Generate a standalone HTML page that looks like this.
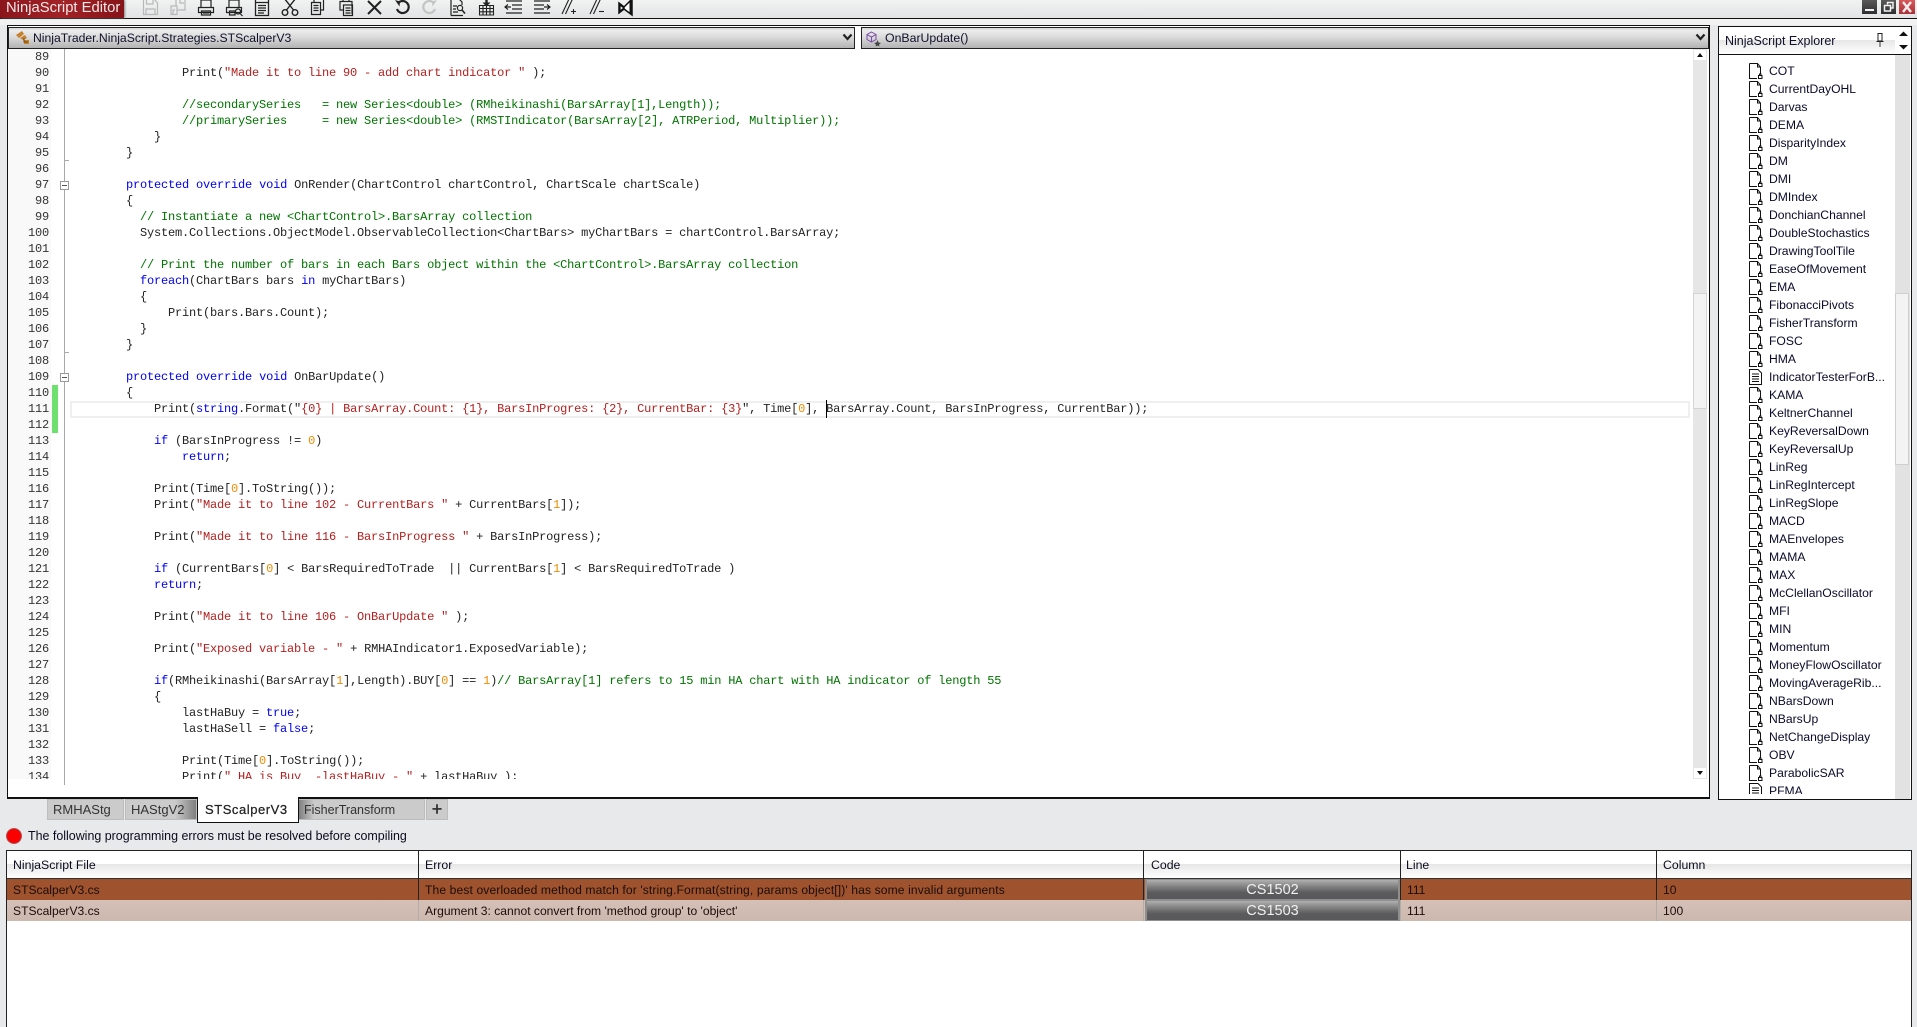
<!DOCTYPE html>
<html><head><meta charset="utf-8"><title>NinjaScript Editor</title>
<style>
html,body{margin:0;padding:0;width:1917px;height:1027px;overflow:hidden;background:#e8e9eb;font-family:"Liberation Sans",Arial,sans-serif;font-size:12px;color:#0a0a1e}
div,svg,pre{position:absolute;box-sizing:border-box}
.t{white-space:pre;line-height:16px}
#code,#nums{font-family:"Liberation Mono",monospace;font-size:12px;letter-spacing:-.2px;line-height:16px;margin:0}
#code{left:70px;top:49px;color:#222}
#nums{left:0;top:49px;width:49px;text-align:right;color:#333}
.k{color:#0000f0}.s{color:#b5201f}.c{color:#007400}.n{color:#f28a00}
.tab{top:799px;height:21px;background:#cbcbcb;border:1px solid #bdbdbd;color:#333;font-size:13px;line-height:20px;white-space:pre}
.hd{top:850px;height:28px;line-height:28px;white-space:pre;color:#0a0a1e;background:none;font-size:12.3px}
.r{height:21px;line-height:23px;white-space:pre;color:#1b0d08;font-size:12.1px}
.btn{left:1145px;width:255px;background:linear-gradient(#b0b0b0 0,#8e8e8e 25%,#5c5c5e 65%,#58585a 100%);border:1px solid #8f8f8f;border-left-width:2px;border-right-width:2px;color:#f0f0f0;text-align:center;font-size:14.5px;line-height:21px}
.li{left:1769px;white-space:pre;line-height:18px;color:#0a0a2a;font-size:12.15px}
</style></head><body>

<!-- top strip -->
<div style="left:0;top:0;width:1917px;height:18px;background:linear-gradient(#f1f2f2,#e3e4e5)"></div>
<div style="left:0;top:18px;width:1917px;height:1px;background:#111"></div>
<div style="left:0;top:19px;width:1917px;height:6px;background:#f2f2f2"></div>
<div style="left:0;top:0;width:124px;height:18px;background:linear-gradient(90deg,#8a161c,#a22227 50%,#851419);box-shadow:1px 0 2px #888"></div>
<div class="t" style="left:6px;top:-1px;font-size:14.8px;line-height:18px;color:#f4e9e9">NinjaScript Editor</div>

<!-- toolbar icons -->
<svg style="left:0;top:0" width="660" height="18" viewBox="0 0 660 18" fill="none" stroke="#222" stroke-width="1.2">
 <g stroke="#b8b8b8"><path d="M143.5 -1V14.5H157.5V3L154 -1M146.5 -1V4H153V-1M146 14V9H155V14"/></g>
 <g stroke="#b8b8b8"><path d="M171 14.5V6H177V14.5ZM177 10H185V-1H176V6M173 14.5V10H175M180 -1V3H184"/></g>
 <g><path d="M201 7V0H211V7M198.500 7.500H213.500V12.500H198.500ZM201.500 11H210.500V15H201.500Z"/><path d="M203 13H209"/></g>
 <g><path d="M229 7V0H239V7M226.500 7.500H241.500V12.500H226.500ZM229.500 11H235V15H229.500Z"/><circle cx="238" cy="11.500" r="2.500"/><path d="M240 13.500L242.500 16"/></g>
 <g><path d="M255.500 -1V15.500H268.500V-1M255.500 2.500H268.500" stroke-width="1.3"/><path d="M258 5.500H266M258 8H266M258 10.500H266M258 13H264"/></g>
 <g stroke-width="1.400"><path d="M284 -2L293.500 10M296 -2L286.500 10"/><circle cx="285" cy="12.500" r="2.800"/><circle cx="295" cy="12.500" r="2.800"/></g>
 <g><path d="M314 2V-1H323.500V10H320"/><path d="M311.500 2.500H320.500V14.500H311.500ZM313.500 5.500H318.500M313.500 8H318.500M313.500 10.500H318.500"/></g>
 <g><path d="M339.500 1.500H352V14"/><path d="M340 1V10H343.500V15.500H352.500V5H343.500V10M345.500 8H350.500M345.500 10.500H350.500M345.500 13H350.500"/><path d="M343 1V-1H349V1"/></g>
 <path d="M368 1L381 14M381 1L368 14" stroke-width="2"/>
 <path d="M397.800 3.500A6 6 0 1 1 397 9" stroke-width="2.200"/><path d="M395 0L400 1.500L399.500 6.500Z" fill="#222" stroke="none"/>
 <g stroke="#c4c4c4"><path d="M434.200 3.500A6 6 0 1 0 435 9" stroke-width="2.200"/><path d="M437 0L432 1.500L432.500 6.500Z" fill="#c4c4c4" stroke="none"/></g>
 <g><path d="M451 15.500V-1H459L462 2V5M451 15.500H463M453 6H457M453 9H456M453 12H458"/><circle cx="460" cy="8" r="2.600"/><path d="M462 10L465 13.500" stroke-width="1.600"/></g>
 <g><path d="M479.500 5.500H493.500V15H479.500ZM483 5.500V15M486.500 5.500V15M490 5.500V15M479.500 8.500H493.500M479.500 11.800H493.500" stroke-width="1.100"/><path d="M486.500 -1V3" stroke-width="2.400"/><path d="M482.500 2.500H490.500L486.500 6.500Z" fill="#222" stroke="none"/></g>
 <g><path d="M506 1H522M512 5H522M512 9H522M506 13H522"/><path d="M511 7H505M508 4.500L505 7L508 9.500"/></g>
 <g><path d="M534 1H550M534 5H544M534 9H544M534 13H550"/><path d="M544 7H550M547 4.500L550 7L547 9.500"/></g>
 <g stroke-width="1.100"><path d="M562 14L569 -1M565.500 14L572.500 -1"/><path d="M571 11.500H576M573.500 9V14"/></g>
 <g stroke-width="1.100"><path d="M590 14L597 -1M593.500 14L600.500 -1"/><path d="M599 11.500H604"/></g>
 <g><path d="M619 3L624 7L632 -1V15L624 9L619 13Z" fill="#fff" stroke="#111" stroke-width="1.500"/><path d="M629.500 1V13L632.500 15V-1Z" fill="#111" stroke="none"/><path d="M624 8L620 5V11Z" fill="#eee" stroke="#111"/></g>
</svg>

<!-- window buttons -->
<div style="left:1862px;top:0;width:15px;height:14px;background:linear-gradient(#5a5a5a,#2e2e30);"></div>
<div style="left:1865px;top:9px;width:9px;height:2px;background:#f2f2f2"></div>
<div style="left:1881px;top:0;width:15px;height:14px;background:linear-gradient(#5a5a5a,#2e2e30)"></div>
<svg style="left:1881px;top:0" width="15" height="14" fill="none" stroke="#f2f2f2" stroke-width="1.500"><path d="M6.500 4.500V2.500H12V8H9.500"/><rect x="3.500" y="5.500" width="6" height="5.500"/></svg>
<div style="left:1899px;top:0;width:16px;height:14px;background:linear-gradient(#d85858,#a93238)"></div>
<svg style="left:1899px;top:0" width="16" height="14" fill="none" stroke="#f6eeee" stroke-width="2.400"><path d="M4 2L12 12M12 2L4 12"/></svg>

<!-- editor frame -->
<div style="left:7px;top:25px;width:1703px;height:774px;background:#fff;border:1px solid #111;border-bottom-width:2px;overflow:hidden"></div>
<div style="left:8px;top:27px;width:847px;height:22px;border:1px solid #222;background:linear-gradient(#d4d4d4 0,#ececec 12%,#d8d8d8 50%,#b2b2b2 100%)"></div>
<div style="left:861px;top:27px;width:848px;height:22px;border:1px solid #222;background:linear-gradient(#d4d4d4 0,#ececec 12%,#d8d8d8 50%,#b2b2b2 100%)"></div>
<svg style="left:14px;top:30px" width="20" height="16"><path d="M2 5L8 1L10 4L5 8ZM6 8L11 5L13 8L9 10ZM10 10H15V14H10Z" fill="#c7812a"/><path d="M10 8V12H14" fill="none" stroke="#6b4a18"/></svg>
<div class="t" style="left:33px;top:30px;font-size:12.2px;color:#10102a">NinjaTrader.NinjaScript.Strategies.STScalperV3</div>
<svg style="left:842px;top:33px" width="12" height="9"><path d="M1.500 1.500L5.500 6L9.500 1.500" fill="none" stroke="#222" stroke-width="2.200"/></svg>
<svg style="left:865px;top:31px" width="18" height="16" fill="none"><path d="M6.500 1L11 3.500V8.500L6.500 11L2 8.500V3.500ZM2 3.500L6.500 6L11 3.500M6.500 6V11" stroke="#7a4aa8" stroke-width="1"/><path d="M12.500 9L13.500 11.500L16 12L14 13.500L14.500 15.500L12.500 14.500L10.500 15.500L11 13.500L9 12L11.500 11.500Z" fill="#444"/></svg>
<div class="t" style="left:885px;top:30px;font-size:12.3px;color:#10102a">OnBarUpdate()</div>
<svg style="left:1695px;top:33px" width="12" height="9"><path d="M1.500 1.500L5.500 6L9.500 1.500" fill="none" stroke="#222" stroke-width="2.200"/></svg>

<!-- gutter -->
<div style="left:8px;top:49px;width:43px;height:730px;background:#f9f9f9"></div>
<div style="left:64px;top:49px;width:1px;height:736px;background:#a8a8a8"></div>
<div style="left:64px;top:160px;width:5px;height:1px;background:#a8a8a8"></div>
<div style="left:64px;top:352px;width:5px;height:1px;background:#a8a8a8"></div>
<div style="left:60px;top:181px;width:9px;height:9px;background:#fff;border:1px solid #999"></div>
<div style="left:62px;top:185px;width:5px;height:1px;background:#555"></div>
<div style="left:60px;top:373px;width:9px;height:9px;background:#fff;border:1px solid #999"></div>
<div style="left:62px;top:377px;width:5px;height:1px;background:#555"></div>
<div style="left:52px;top:385px;width:6px;height:48px;background:#6fe06f"></div>
<div style="left:70px;top:401px;width:1620px;height:17px;border:2px solid #efefef"></div>
<div style="left:826px;top:400px;width:1px;height:18px;background:#000"></div>

<div style="left:0;top:49px;width:1693px;height:730px;overflow:hidden">
<pre id="nums" style="top:0">89
90
91
92
93
94
95
96
97
98
99
100
101
102
103
104
105
106
107
108
109
110
111
112
113
114
115
116
117
118
119
120
121
122
123
124
125
126
127
128
129
130
131
132
133
134</pre>
<pre id="code" style="top:0"> 
                Print(<span class="s">"Made it to line 90 - add chart indicator "</span> );

                <span class="c">//secondarySeries   = new Series&lt;double&gt; (RMheikinashi(BarsArray[1],Length));</span>
                <span class="c">//primarySeries     = new Series&lt;double&gt; (RMSTIndicator(BarsArray[2], ATRPeriod, Multiplier));</span>
            }
        }

        <span class="k">protected</span> <span class="k">override</span> <span class="k">void</span> OnRender(ChartControl chartControl, ChartScale chartScale)
        {
          <span class="c">// Instantiate a new &lt;ChartControl&gt;.BarsArray collection</span>
          System.Collections.ObjectModel.ObservableCollection&lt;ChartBars&gt; myChartBars = chartControl.BarsArray;

          <span class="c">// Print the number of bars in each Bars object within the &lt;ChartControl&gt;.BarsArray collection</span>
          <span class="k">foreach</span>(ChartBars bars <span class="k">in</span> myChartBars)
          {
              Print(bars.Bars.Count);
          }
        }

        <span class="k">protected</span> <span class="k">override</span> <span class="k">void</span> OnBarUpdate()
        {
            Print(<span class="k">string</span>.Format("<span class="s">{0} | BarsArray.Count: {1}, BarsInProgres: {2}, CurrentBar: {3}</span>", Time[<span class="n">0</span>], BarsArray.Count, BarsInProgress, CurrentBar));

            <span class="k">if</span> (BarsInProgress != <span class="n">0</span>)
                <span class="k">return</span>;

            Print(Time[<span class="n">0</span>].ToString());
            Print(<span class="s">"Made it to line 102 - CurrentBars "</span> + CurrentBars[<span class="n">1</span>]);

            Print(<span class="s">"Made it to line 116 - BarsInProgress "</span> + BarsInProgress);

            <span class="k">if</span> (CurrentBars[<span class="n">0</span>] &lt; BarsRequiredToTrade  || CurrentBars[<span class="n">1</span>] &lt; BarsRequiredToTrade )
            <span class="k">return</span>;

            Print(<span class="s">"Made it to line 106 - OnBarUpdate "</span> );

            Print(<span class="s">"Exposed variable - "</span> + RMHAIndicator1.ExposedVariable);

            <span class="k">if</span>(RMheikinashi(BarsArray[<span class="n">1</span>],Length).BUY[<span class="n">0</span>] == <span class="n">1</span>)<span class="c">// BarsArray[1] refers to 15 min HA chart with HA indicator of length 55</span>
            {
                lastHaBuy = <span class="k">true</span>;
                lastHaSell = <span class="k">false</span>;

                Print(Time[<span class="n">0</span>].ToString());
                Print(<span class="s">" HA is Buy  -lastHaBuy - "</span> + lastHaBuy );</pre>
</div>

<!-- editor scrollbar -->
<div style="left:1693px;top:49px;width:14px;height:730px;background:#e6e6e6"></div>
<div style="left:1694px;top:50px;width:12px;height:10px;background:#fff"></div>
<svg style="left:1694px;top:50px" width="12" height="10"><path d="M3 7H9L6 3Z" fill="#111"/></svg>
<div style="left:1693px;top:293px;width:14px;height:116px;background:#f3f3f3;border:1px solid #d4d4d4"></div>
<div style="left:1694px;top:768px;width:12px;height:10px;background:#fff"></div>
<svg style="left:1694px;top:768px" width="12" height="10"><path d="M3 3H9L6 7Z" fill="#111"/></svg>

<!-- tabs -->
<div class="tab" style="left:47px;width:77px;padding-left:5px">RMHAStg</div>
<div class="tab" style="left:125px;width:72px;padding-left:5px;background:linear-gradient(90deg,#cbcbcb 70%,#7f7f7f 100%)">HAStgV2</div>
<div class="tab" style="left:298px;width:127px;padding-left:5px;font-size:12.5px;background:linear-gradient(90deg,#7f7f7f 0,#cbcbcb 12%)">FisherTransform</div>
<div class="tab" style="left:426px;width:22px;font-size:18px;text-align:center;line-height:18px;padding:0;-webkit-text-stroke:.4px #333">+</div>
<div style="left:197px;top:797px;width:102px;height:26px;background:#fff;border:1px solid #111;border-top:0"></div>
<div class="t" style="left:205px;top:802px;font-size:13px;letter-spacing:.55px;color:#222;-webkit-text-stroke:.25px #222">STScalperV3</div>

<!-- error message -->
<div style="left:6px;top:828px;width:16px;height:16px;border-radius:50%;background:#fb0000;border:1px solid #a55"></div>
<div class="t" style="left:28px;top:828px;font-size:12.45px;color:#0a0a1e">The following programming errors must be resolved before compiling</div>

<!-- table -->
<div style="left:6px;top:850px;width:1906px;height:177px;background:#fff;border:1px solid #222;border-bottom:0"></div>
<div style="left:7px;top:864px;width:1904px;height:14px;background:linear-gradient(#e6e6e6,#fff)"></div>
<div style="left:7px;top:878px;width:1904px;height:1px;background:#333"></div>
<div style="left:7px;top:879px;width:1904px;height:21px;background:#9e522d"></div>
<div style="left:7px;top:900px;width:1904px;height:21px;background:linear-gradient(#d4c0b7,#cdb8ae)"></div>
<div style="left:418px;top:851px;width:1px;height:49px;background:#222"></div>
<div style="left:1143px;top:851px;width:1px;height:49px;background:#222"></div>
<div style="left:1400px;top:851px;width:1px;height:49px;background:#222"></div>
<div style="left:1656px;top:851px;width:1px;height:49px;background:#222"></div>
<div style="left:418px;top:900px;width:1px;height:21px;background:#b4aca8"></div>
<div style="left:1143px;top:900px;width:1px;height:21px;background:#b4aca8"></div>
<div style="left:1400px;top:900px;width:1px;height:21px;background:#b4aca8"></div>
<div style="left:1656px;top:900px;width:1px;height:21px;background:#b4aca8"></div>

<div class="hd" style="left:13px;top:851px">NinjaScript File</div>
<div class="hd" style="left:425px;top:851px">Error</div>
<div class="hd" style="left:1151px;top:851px">Code</div>
<div class="hd" style="left:1406px;top:851px">Line</div>
<div class="hd" style="left:1663px;top:851px">Column</div>

<div class="r" style="left:13px;top:879px">STScalperV3.cs</div>
<div class="r" style="left:425px;top:879px;letter-spacing:.115px">The best overloaded method match for 'string.Format(string, params object[])' has some invalid arguments</div>
<div class="btn" style="top:879px;height:21px">CS1502</div>
<div class="r" style="left:1407px;top:879px">111</div>
<div class="r" style="left:1663px;top:879px">10</div>

<div class="r" style="left:13px;top:900px">STScalperV3.cs</div>
<div class="r" style="left:425px;top:900px">Argument 3: cannot convert from 'method group' to 'object'</div>
<div class="btn" style="top:900px;height:21px">CS1503</div>
<div class="r" style="left:1407px;top:900px">111</div>
<div class="r" style="left:1663px;top:900px">100</div>

<!-- explorer -->
<div style="left:1718px;top:26px;width:194px;height:774px;background:#fff;border:1px solid #111"></div>
<div style="left:1719px;top:40px;width:176px;height:14px;background:linear-gradient(#e6e6e6,#fff)"></div>
<div style="left:1719px;top:54px;width:192px;height:1px;background:#111"></div>
<div class="t" style="left:1725px;top:33px;font-size:12.5px;color:#10102a">NinjaScript Explorer</div>
<svg style="left:1875px;top:32px" width="10" height="16" fill="none" stroke="#222"><path d="M3 1.500H7V9H3ZM1.500 9.500H8.500"/><path d="M5 10V15" stroke="#777" stroke-width="1.500"/></svg>
<svg style="left:1897px;top:29px" width="13" height="22"><path d="M2 7H11L6.500 2.500Z" fill="#111"/><path d="M2 16H11L6.500 20.500Z" fill="#111"/></svg>
<div style="left:1895px;top:55px;width:15px;height:744px;background:#e2e2e2"></div>
<div style="left:1895px;top:293px;width:14px;height:172px;background:#f3f3f3;border:1px solid #cfcfcf"></div>

<svg width="0" height="0" style="left:0;top:0">
 <symbol id="f" viewBox="0 0 14 16"><path d="M.5 .5H8.500L11.500 4V11M.5 .5V15.500H8M8.500 .5V4H11.500" fill="none" stroke="#111" stroke-width="1"/><path d="M9.500 12.500H13V15.500H9.500Z" fill="#fff" stroke="#111"/><path d="M10.500 12.500V11H12V12.500" fill="none" stroke="#111"/></symbol>
 <symbol id="d" viewBox="0 0 14 16"><path d="M.5 .5H9L12.500 4V15.500H.5ZM3 5H10M3 7.500H10M3 10H10M3 12.500H10" fill="none" stroke="#111"/></symbol>
</svg>

<div style="left:1719px;top:55px;width:176px;height:739px;overflow:hidden">
<div style="left:0;top:0;width:176px;height:760px">
<svg style="left:30px;top:8px" width="14" height="16"><use href="#f"/></svg><div class="li" style="left:50px;top:6.500px">COT</div>
<svg style="left:30px;top:26px" width="14" height="16"><use href="#f"/></svg><div class="li" style="left:50px;top:24.500px">CurrentDayOHL</div>
<svg style="left:30px;top:44px" width="14" height="16"><use href="#f"/></svg><div class="li" style="left:50px;top:42.500px">Darvas</div>
<svg style="left:30px;top:62px" width="14" height="16"><use href="#f"/></svg><div class="li" style="left:50px;top:60.500px">DEMA</div>
<svg style="left:30px;top:80px" width="14" height="16"><use href="#f"/></svg><div class="li" style="left:50px;top:78.500px">DisparityIndex</div>
<svg style="left:30px;top:98px" width="14" height="16"><use href="#f"/></svg><div class="li" style="left:50px;top:96.500px">DM</div>
<svg style="left:30px;top:116px" width="14" height="16"><use href="#f"/></svg><div class="li" style="left:50px;top:114.500px">DMI</div>
<svg style="left:30px;top:134px" width="14" height="16"><use href="#f"/></svg><div class="li" style="left:50px;top:132.500px">DMIndex</div>
<svg style="left:30px;top:152px" width="14" height="16"><use href="#f"/></svg><div class="li" style="left:50px;top:150.500px">DonchianChannel</div>
<svg style="left:30px;top:170px" width="14" height="16"><use href="#f"/></svg><div class="li" style="left:50px;top:168.500px">DoubleStochastics</div>
<svg style="left:30px;top:188px" width="14" height="16"><use href="#f"/></svg><div class="li" style="left:50px;top:186.500px">DrawingToolTile</div>
<svg style="left:30px;top:206px" width="14" height="16"><use href="#f"/></svg><div class="li" style="left:50px;top:204.500px">EaseOfMovement</div>
<svg style="left:30px;top:224px" width="14" height="16"><use href="#f"/></svg><div class="li" style="left:50px;top:222.500px">EMA</div>
<svg style="left:30px;top:242px" width="14" height="16"><use href="#f"/></svg><div class="li" style="left:50px;top:240.500px">FibonacciPivots</div>
<svg style="left:30px;top:260px" width="14" height="16"><use href="#f"/></svg><div class="li" style="left:50px;top:258.500px">FisherTransform</div>
<svg style="left:30px;top:278px" width="14" height="16"><use href="#f"/></svg><div class="li" style="left:50px;top:276.500px">FOSC</div>
<svg style="left:30px;top:296px" width="14" height="16"><use href="#f"/></svg><div class="li" style="left:50px;top:294.500px">HMA</div>
<svg style="left:30px;top:314px" width="14" height="16"><use href="#d"/></svg><div class="li" style="left:50px;top:312.500px">IndicatorTesterForB...</div>
<svg style="left:30px;top:332px" width="14" height="16"><use href="#f"/></svg><div class="li" style="left:50px;top:330.500px">KAMA</div>
<svg style="left:30px;top:350px" width="14" height="16"><use href="#f"/></svg><div class="li" style="left:50px;top:348.500px">KeltnerChannel</div>
<svg style="left:30px;top:368px" width="14" height="16"><use href="#f"/></svg><div class="li" style="left:50px;top:366.500px">KeyReversalDown</div>
<svg style="left:30px;top:386px" width="14" height="16"><use href="#f"/></svg><div class="li" style="left:50px;top:384.500px">KeyReversalUp</div>
<svg style="left:30px;top:404px" width="14" height="16"><use href="#f"/></svg><div class="li" style="left:50px;top:402.500px">LinReg</div>
<svg style="left:30px;top:422px" width="14" height="16"><use href="#f"/></svg><div class="li" style="left:50px;top:420.500px">LinRegIntercept</div>
<svg style="left:30px;top:440px" width="14" height="16"><use href="#f"/></svg><div class="li" style="left:50px;top:438.500px">LinRegSlope</div>
<svg style="left:30px;top:458px" width="14" height="16"><use href="#f"/></svg><div class="li" style="left:50px;top:456.500px">MACD</div>
<svg style="left:30px;top:476px" width="14" height="16"><use href="#f"/></svg><div class="li" style="left:50px;top:474.500px">MAEnvelopes</div>
<svg style="left:30px;top:494px" width="14" height="16"><use href="#f"/></svg><div class="li" style="left:50px;top:492.500px">MAMA</div>
<svg style="left:30px;top:512px" width="14" height="16"><use href="#f"/></svg><div class="li" style="left:50px;top:510.500px">MAX</div>
<svg style="left:30px;top:530px" width="14" height="16"><use href="#f"/></svg><div class="li" style="left:50px;top:528.500px">McClellanOscillator</div>
<svg style="left:30px;top:548px" width="14" height="16"><use href="#f"/></svg><div class="li" style="left:50px;top:546.500px">MFI</div>
<svg style="left:30px;top:566px" width="14" height="16"><use href="#f"/></svg><div class="li" style="left:50px;top:564.500px">MIN</div>
<svg style="left:30px;top:584px" width="14" height="16"><use href="#f"/></svg><div class="li" style="left:50px;top:582.500px">Momentum</div>
<svg style="left:30px;top:602px" width="14" height="16"><use href="#f"/></svg><div class="li" style="left:50px;top:600.500px">MoneyFlowOscillator</div>
<svg style="left:30px;top:620px" width="14" height="16"><use href="#f"/></svg><div class="li" style="left:50px;top:618.500px">MovingAverageRib...</div>
<svg style="left:30px;top:638px" width="14" height="16"><use href="#f"/></svg><div class="li" style="left:50px;top:636.500px">NBarsDown</div>
<svg style="left:30px;top:656px" width="14" height="16"><use href="#f"/></svg><div class="li" style="left:50px;top:654.500px">NBarsUp</div>
<svg style="left:30px;top:674px" width="14" height="16"><use href="#f"/></svg><div class="li" style="left:50px;top:672.500px">NetChangeDisplay</div>
<svg style="left:30px;top:692px" width="14" height="16"><use href="#f"/></svg><div class="li" style="left:50px;top:690.500px">OBV</div>
<svg style="left:30px;top:710px" width="14" height="16"><use href="#f"/></svg><div class="li" style="left:50px;top:708.500px">ParabolicSAR</div>
<svg style="left:30px;top:728px" width="14" height="16"><use href="#d"/></svg><div class="li" style="left:50px;top:726.500px">PFMA</div>
</div>
</div>
</body></html>
